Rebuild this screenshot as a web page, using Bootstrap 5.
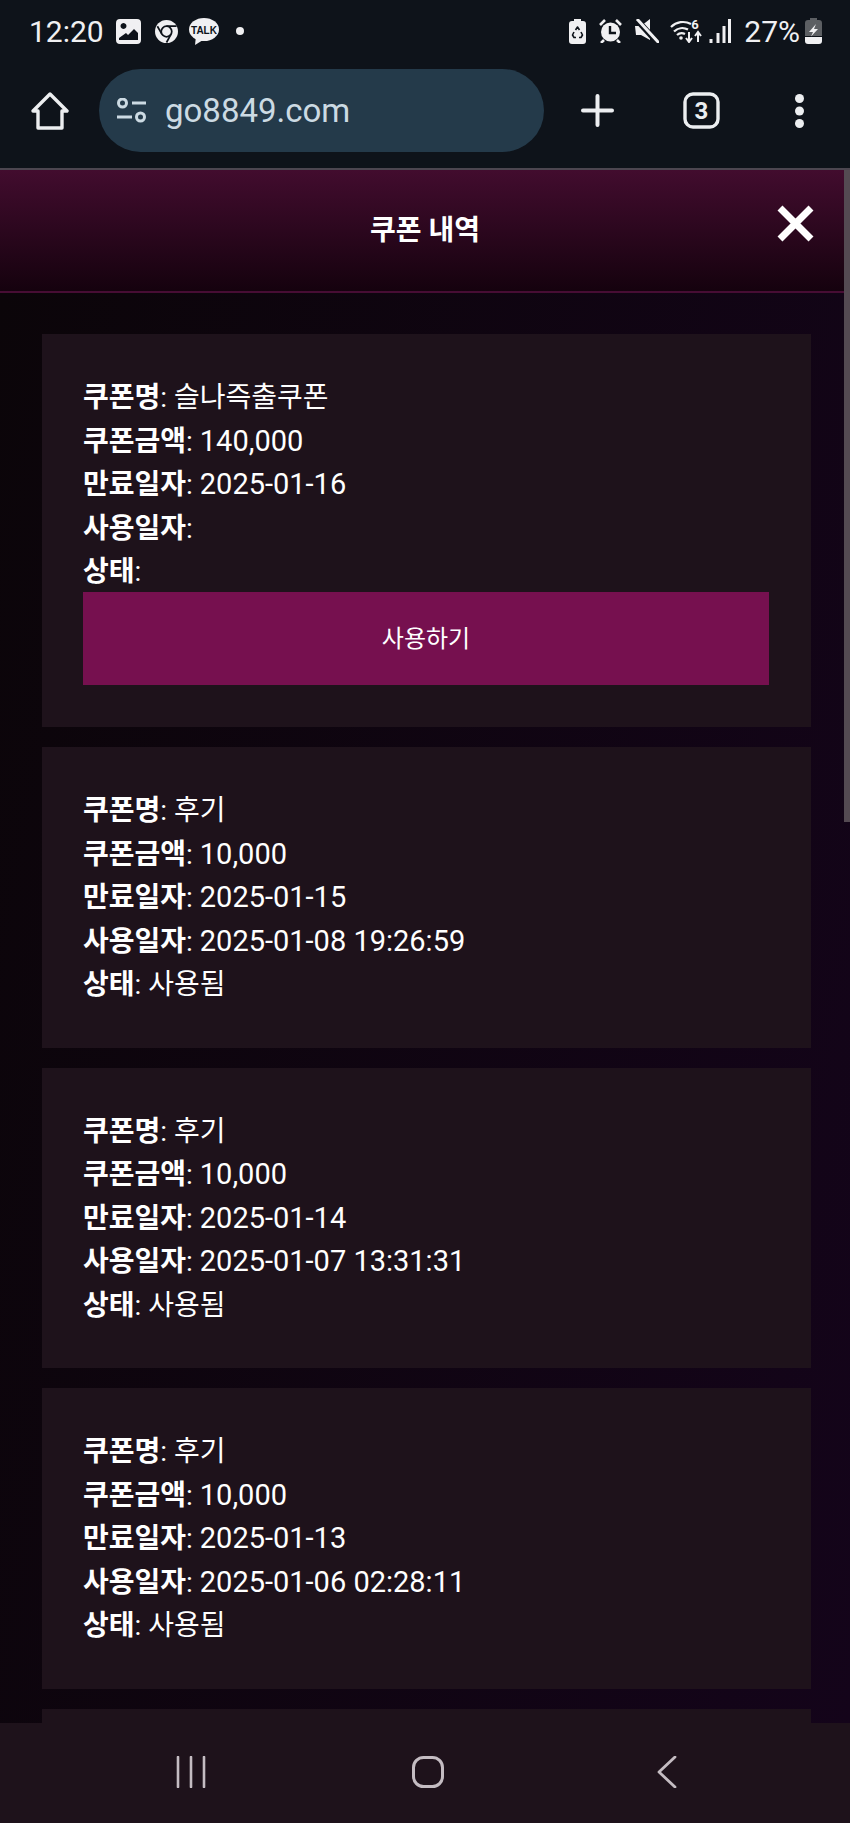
<!DOCTYPE html>
<html lang="ko">
<head>
  <meta charset="UTF-8">
  <meta name="viewport" content="width=device-width, initial-scale=1.0">
  <title>쿠폰 내역</title>
  <link href="https://cdn.jsdelivr.net/npm/bootstrap@5.3.0/dist/css/bootstrap.min.css" rel="stylesheet">
  <style>
    html, body {
      height: 100%;
      overflow: hidden;
    }
    body {
      font-family: Roboto, "Noto Sans CJK KR", sans-serif;
      background-color: #0e0710;
      color: #fff;
    }
    .phone {
      height: 1823px;
    }
    /* browser chrome */
    .chrome-top {
      height: 170px;
      background-color: #0e131a;
      border-bottom: 2px solid #4c4650;
    }
    .status-line {
      height: 62px;
      padding: 0 28px 0 29px;
      font-size: 30px;
      color: #f0f0f2;
    }
    .status-line svg {
      display: block;
    }
    .gap-l {
      margin-left: 13px;
    }
    .gap-s {
      margin-left: 5px;
    }
    .gap-m {
      margin-left: 7px;
    }
    .gap-n {
      margin-left: 11px;
    }
    .gap-g {
      margin-left: 12px;
    }
    .gap-c {
      margin-left: 14px;
    }
    .gap-xl {
      margin-left: 17px;
    }
    .wifi-icon {
      margin-top: -3px;
    }
    .toolbar {
      height: 83px;
      margin-top: 7px;
      padding-left: 31px;
    }
    .url-pill {
      width: 445px;
      height: 83px;
      margin-left: 30px;
      padding-left: 17px;
      border-radius: 42px;
      background-color: #243a4a;
    }
    .url-text {
      margin-left: 18px;
      font-size: 33px;
      color: #ccdae3;
    }
    .tool-plus {
      margin-left: 37px;
    }
    .tool-tabs {
      margin-left: 69px;
    }
    .tool-dots {
      margin-left: 75px;
    }
    /* page */
    .view {
      min-height: 0;
    }
    .modal-head {
      height: 123px;
      background: linear-gradient(180deg, #420c2e 0%, #15020e 100%);
      border-bottom: 2px solid #470d34;
    }
    .modal-title-text {
      margin-top: 1px;
      font-size: 28px;
      font-weight: 700;
    }
    .close-mark {
      right: 36px;
      top: 35px;
    }
    .coupon-list {
      gap: 20px;
      min-height: 0;
      padding: 41px 39px 0 42px;
      background: linear-gradient(100deg, #0b0509 0%, #14041a 100%);
    }
    .coupon-box {
      flex-shrink: 0;
      padding: 42px 42px 41px 41px;
      border: 0;
      border-radius: 0;
      background-color: #1e121b;
      color: #fff;
      font-size: 28px;
      line-height: 43.5px;
    }
    .coupon-box b {
      font-weight: 700;
    }
    .coupon-num {
      font-size: 29px;
    }
    .coupon-stub {
      height: 300px;
    }
    .use-btn {
      height: 93px;
      margin: -1.5px 0 1px;
      border: 0;
      border-radius: 0;
      background-color: #76104f;
      color: #fff;
      font-size: 24px;
    }
    .scroll-thumb {
      top: 0;
      right: 0;
      width: 6px;
      height: 652px;
      background-color: #544a52;
    }
    .nav-keys {
      height: 100px;
      background-color: #1e121b;
    }
    .key-recent {
      left: 176px;
    }
    .key-home {
      left: 412px;
    }
    .key-back {
      left: 657px;
    }
    .nav-keys svg {
      top: 33px;
    }
  </style>
</head>
<body>
  <div class="phone d-flex flex-column">
    <div class="chrome-top flex-shrink-0">
      <div class="status-line d-flex align-items-center">
        <span>12:20</span>
        <svg class="gap-g" width="25" height="25" viewBox="0 0 25 25">
          <path fill="#f0f0f2" fill-rule="evenodd" d="M4 0h17a4 4 0 0 1 4 4v17a4 4 0 0 1-4 4H4a4 4 0 0 1-4-4V4a4 4 0 0 1 4-4zM3 21h19v-7l-4-4-6 6-2-2-7 5z M7.500 4a3 3 0 1 0 .01 0z"/>
        </svg>
        <svg class="gap-c" width="23" height="23" viewBox="0 0 24 24">
          <circle cx="12" cy="12" r="12" fill="#f0f0f2"/>
          <path d="M12 6.500h10.500M7.200 14.700 2.500 6.500M16.800 14.700 12 23.500" stroke="#0e131a" stroke-width="1.800" fill="none"/>
          <circle cx="12" cy="12" r="5.500" fill="#f0f0f2" stroke="#0e131a" stroke-width="1.800"/>
        </svg>
        <svg class="gap-n" width="30" height="27" viewBox="0 0 30 27">
          <ellipse cx="15" cy="11.500" rx="15" ry="11.500" fill="#f0f0f2"/>
          <path d="M7 18l-1 9 8-5z" fill="#f0f0f2"/>
          <text x="15" y="15.500" text-anchor="middle" font-family="Liberation Sans, sans-serif" font-size="10" font-weight="700" fill="#0e131a">TALK</text>
        </svg>
        <svg class="gap-xl" width="8" height="8" viewBox="0 0 8 8"><circle cx="4" cy="4" r="4" fill="#f0f0f2"/></svg>

        <svg class="ms-auto" width="17" height="25" viewBox="0 0 17 25">
          <path fill="#f0f0f2" d="M5 0h7v2h2a3 3 0 0 1 3 3v17a3 3 0 0 1-3 3H3a3 3 0 0 1-3-3V5a3 3 0 0 1 3-3h2z"/>
          <path fill="none" stroke="#0e131a" stroke-width="1.600" stroke-linejoin="round" d="M6.500 11 8.500 8l2 3M12 13l1.500 3-1.500 2.500H10M7 18.500H5L3.500 16 5 13"/>
        </svg>
        <svg class="gap-l" width="23" height="24" viewBox="0 0 23 24">
          <circle cx="11.500" cy="13" r="9.500" fill="#f0f0f2"/>
          <path d="M11 7v7h6" fill="none" stroke="#0e131a" stroke-width="2.400"/>
          <path d="M1 6l5-5M22 6l-5-5M5 21l-3 3M18 21l3 3" stroke="#f0f0f2" stroke-width="2.600"/>
        </svg>
        <svg class="gap-l" width="24" height="24" viewBox="0 0 24 24">
          <path fill="#f0f0f2" d="M0 7h6l9-7v21l-9-5H1z"/>
          <path d="M1 0l22 24" stroke="#0e131a" stroke-width="6"/>
          <path d="M2 0l22 24" stroke="#f0f0f2" stroke-width="3"/>
        </svg>
        <svg class="gap-n wifi-icon" width="32" height="27" viewBox="0 -3 32 27">
          <path d="M1 8a17 17 0 0 1 20-3M4 12.500a12 12 0 0 1 14-2M7 16a7 7 0 0 1 8-1" fill="none" stroke="#f0f0f2" stroke-width="2.200"/>
          <circle cx="11" cy="19" r="1.800" fill="#f0f0f2"/>
          <text x="25" y="10" text-anchor="middle" font-family="Roboto, sans-serif" font-size="13" font-weight="700" fill="#f0f0f2">6</text>
          <path d="M19 13v9M16 19l3 4 3-4M28 23V14M25 17l3-4 3 4" fill="none" stroke="#f0f0f2" stroke-width="2"/>
        </svg>
        <svg class="gap-m" width="22" height="24" viewBox="0 0 22 24">
          <path d="M2 20v4M9 14v10M15 7v17M20.500 0v24" stroke="#f0f0f2" stroke-width="3"/>
        </svg>
        <span class="gap-l">27%</span>
        <svg class="gap-s" width="17" height="26" viewBox="0 0 17 26">
          <path fill="#5c5f63" d="M5 0h7v2h2a3 3 0 0 1 3 3v13H0V5a3 3 0 0 1 3-3h2z"/>
          <path fill="#f0f0f2" d="M0 19h17v4a3 3 0 0 1-3 3H3a3 3 0 0 1-3-3z"/>
          <path fill="#f0f0f2" d="M11 6 4 14h4l-2 4.500L13 11H9z"/>
        </svg>
      </div>

      <div class="toolbar d-flex align-items-center">
        <svg width="38" height="38" viewBox="0 0 38 38">
          <path d="M2 19 19 2l17 17h-5v17H7V19z" fill="none" stroke="#eceef0" stroke-width="3.400" stroke-linejoin="round"/>
        </svg>
        <div class="url-pill d-flex align-items-center">
          <svg width="31" height="25" viewBox="0 0 31 25">
            <circle cx="6.500" cy="5" r="4" fill="none" stroke="#ccdae3" stroke-width="3"/>
            <path d="M16 5h14M1 19h15" stroke="#ccdae3" stroke-width="3"/>
            <circle cx="24.500" cy="19" r="4" fill="none" stroke="#ccdae3" stroke-width="3"/>
          </svg>
          <span class="url-text">go8849.com</span>
        </div>
        <svg class="tool-plus" width="33" height="33" viewBox="0 0 33 33">
          <path d="M16.500 2v29M2 16.500h29" stroke="#eceef0" stroke-width="4" stroke-linecap="round"/>
        </svg>
        <svg class="tool-tabs" width="37" height="37" viewBox="0 0 37 37">
          <rect x="2" y="2" width="33" height="33" rx="8" fill="none" stroke="#eceef0" stroke-width="3.400"/>
          <text x="18.500" y="27" text-anchor="middle" font-family="Roboto, sans-serif" font-size="24" font-weight="700" fill="#eceef0">3</text>
        </svg>
        <svg class="tool-dots" width="9" height="34" viewBox="0 0 9 34">
          <circle cx="4.500" cy="4.500" r="4.500" fill="#eceef0"/>
          <circle cx="4.500" cy="17" r="4.500" fill="#eceef0"/>
          <circle cx="4.500" cy="29.500" r="4.500" fill="#eceef0"/>
        </svg>
      </div>
    </div>

    <div class="view flex-grow-1 d-flex flex-column position-relative">
      <div class="modal-head flex-shrink-0 d-flex align-items-center justify-content-center position-relative">
        <span class="modal-title-text">쿠폰 내역</span>
        <svg class="close-mark position-absolute" width="37" height="37" viewBox="0 0 37 37">
          <path d="M3 3l31 31M34 3 3 34" stroke="#fff" stroke-width="7"/>
        </svg>
      </div>

      <div class="coupon-list flex-grow-1 overflow-hidden d-flex flex-column">
        <div class="card coupon-box">
          <div><b>쿠폰명</b>: 슬나즉출쿠폰</div>
          <div><b>쿠폰금액</b>: <span class="coupon-num">140,000</span></div>
          <div><b>만료일자</b>: <span class="coupon-num">2025-01-16</span></div>
          <div><b>사용일자</b>:</div>
          <div><b>상태</b>:</div>
          <button type="button" class="btn use-btn w-100">사용하기</button>
        </div>
        <div class="card coupon-box">
          <div><b>쿠폰명</b>: 후기</div>
          <div><b>쿠폰금액</b>: <span class="coupon-num">10,000</span></div>
          <div><b>만료일자</b>: <span class="coupon-num">2025-01-15</span></div>
          <div><b>사용일자</b>: <span class="coupon-num">2025-01-08 19:26:59</span></div>
          <div><b>상태</b>: 사용됨</div>
        </div>
        <div class="card coupon-box">
          <div><b>쿠폰명</b>: 후기</div>
          <div><b>쿠폰금액</b>: <span class="coupon-num">10,000</span></div>
          <div><b>만료일자</b>: <span class="coupon-num">2025-01-14</span></div>
          <div><b>사용일자</b>: <span class="coupon-num">2025-01-07 13:31:31</span></div>
          <div><b>상태</b>: 사용됨</div>
        </div>
        <div class="card coupon-box">
          <div><b>쿠폰명</b>: 후기</div>
          <div><b>쿠폰금액</b>: <span class="coupon-num">10,000</span></div>
          <div><b>만료일자</b>: <span class="coupon-num">2025-01-13</span></div>
          <div><b>사용일자</b>: <span class="coupon-num">2025-01-06 02:28:11</span></div>
          <div><b>상태</b>: 사용됨</div>
        </div>
        <div class="card coupon-box coupon-stub"></div>
      </div>

      <div class="scroll-thumb position-absolute"></div>
    </div>

    <div class="nav-keys flex-shrink-0 position-relative">
      <svg class="key-recent position-absolute" width="30" height="32" viewBox="0 0 30 32">
        <path d="M2 1v30M15 1v30M28 1v30" stroke="#c4bcc2" stroke-width="2.600" stroke-linecap="round"/>
      </svg>
      <svg class="key-home position-absolute" width="32" height="32" viewBox="0 0 32 32">
        <rect x="1.500" y="1.500" width="29" height="29" rx="10" fill="none" stroke="#c4bcc2" stroke-width="3"/>
      </svg>
      <svg class="key-back position-absolute" width="20" height="32" viewBox="0 0 20 32">
        <path d="M18 1 2 16l16 15" fill="none" stroke="#c4bcc2" stroke-width="2.800" stroke-linecap="round" stroke-linejoin="round"/>
      </svg>
    </div>
  </div>

  <script src="https://cdn.jsdelivr.net/npm/bootstrap@5.3.0/dist/js/bootstrap.bundle.min.js"></script>
</body>
</html>
